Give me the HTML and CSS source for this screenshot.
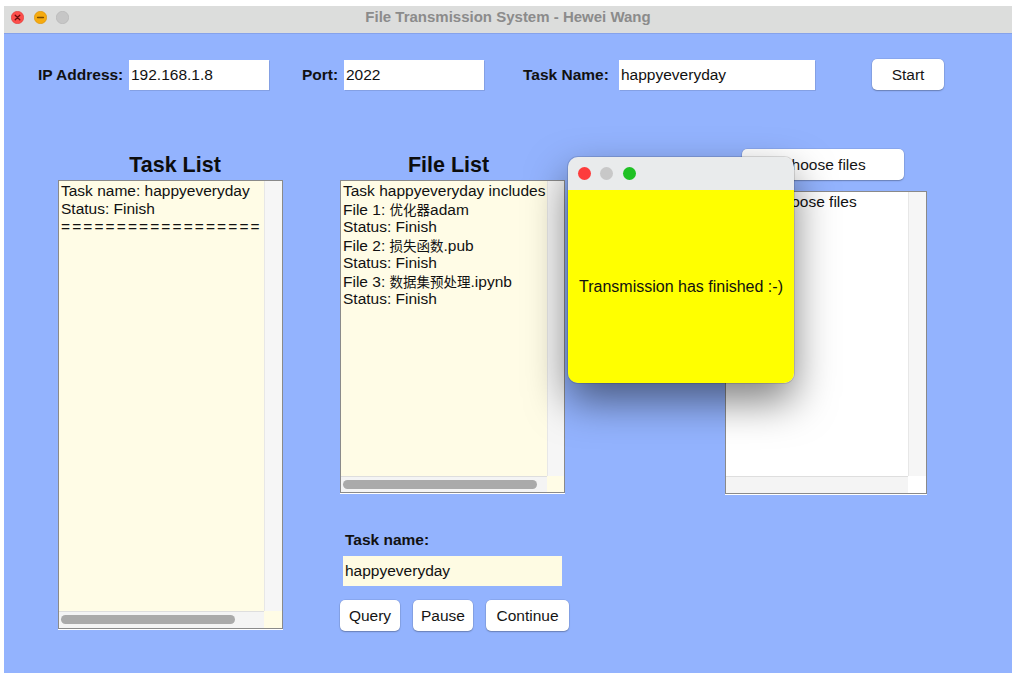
FILE: index.html
```html
<!DOCTYPE html>
<html lang="en">
<head>
<meta charset="utf-8">
<title>File Transmission System - Hewei Wang</title>
<link rel="stylesheet" href="styles.css">
</head>
<body>
<div class="window">
  <div class="titlebar">
    <div class="lights">
      <svg class="light" width="13" height="13" viewBox="0 0 13 13"><circle cx="6.5" cy="6.5" r="6.2" fill="#fd4d4a" stroke="#de3a37" stroke-width="0.6"/><path d="M4.2 4.2 L8.8 8.8 M8.8 4.2 L4.2 8.8" stroke="#6b0b0b" stroke-width="1.3" stroke-linecap="round"/></svg>
      <svg class="light" width="13" height="13" viewBox="0 0 13 13"><circle cx="6.5" cy="6.5" r="6.2" fill="#f6ab10" stroke="#d99208" stroke-width="0.6"/><path d="M3.6 6.5 L9.4 6.5" stroke="#7a4a00" stroke-width="1.4" stroke-linecap="round"/></svg>
      <svg class="light" width="13" height="13" viewBox="0 0 13 13"><circle cx="6.5" cy="6.5" r="6.2" fill="#c6c6c6" stroke="#b4b4b4" stroke-width="0.6"/></svg>
    </div>
    <div class="title">File Transmission System - Hewei Wang</div>
    <div></div>
  </div>
  <div class="content">
    <div class="toprow">
      <span class="lbl lbl-ip">IP Address:</span>
      <div class="field f-ip">192.168.1.8</div>
      <span class="lbl lbl-port">Port:</span>
      <div class="field f-port">2022</div>
      <span class="lbl lbl-task">Task Name:</span>
      <div class="field f-task">happyeveryday</div>
      <button class="btn btn-start">Start</button>
    </div>
    <div class="main">
      <div class="col col1">
        <h2 class="heading h-task">Task List</h2>
        <div class="listbox cream box-task">
          <div class="view">
            <div class="line">Task name: happyeveryday</div>
            <div class="line">Status: Finish</div>
            <div class="line eq">==================</div>
          </div>
          <div class="vtrack"></div>
          <div class="htrack"><div class="thumb thumb-task"></div></div>
          <div class="corner"></div>
        </div>
      </div>
      <div class="col col2">
        <h2 class="heading h-file">File List</h2>
        <div class="listbox cream box-file">
          <div class="view">
            <div class="line">Task happyeveryday includes</div>
            <div class="line">File 1: <span class="cjk">优化器</span>adam</div>
            <div class="line">Status: Finish</div>
            <div class="line">File 2: <span class="cjk">损失函数</span>.pub</div>
            <div class="line">Status: Finish</div>
            <div class="line">File 3: <span class="cjk">数据集预处理</span>.ipynb</div>
            <div class="line">Status: Finish</div>
          </div>
          <div class="vtrack"></div>
          <div class="htrack"><div class="thumb thumb-file"></div></div>
          <div class="corner"></div>
        </div>
        <div class="query-label">Task name:</div>
        <div class="field cream-field f-query">happyeveryday</div>
        <div class="btnrow">
          <button class="btn btn-query">Query</button>
          <button class="btn btn-pause">Pause</button>
          <button class="btn btn-continue">Continue</button>
        </div>
      </div>
      <div class="col col3">
        <button class="btn btn-choose">Choose files</button>
        <div class="listbox white box-choose">
          <div class="view view-center">
            <div class="line">Choose files</div>
          </div>
          <div class="vtrack"></div>
          <div class="htrack"></div>
          <div class="corner"></div>
        </div>
      </div>
    </div>
    <div class="popup">
      <div class="popup-bar">
        <span class="dot dot-red"></span>
        <span class="dot dot-gray"></span>
        <span class="dot dot-green"></span>
      </div>
      <div class="popup-body">Transmission has finished :-)</div>
    </div>
  </div>
</div>
</body>
</html>
```
FILE: styles.css
```css
html, body {
  margin: 0;
  padding: 0;
  background: #ffffff;
}

body {
  font-family: "Liberation Sans", "Noto Sans CJK SC", sans-serif;
  font-size: 15.5px;
  color: #111111;
}

.window {
  margin: 6px 0 0 4px;
  width: 1008px;
  height: 667px;
  overflow: hidden;
}

.titlebar {
  height: 28px;
  box-sizing: border-box;
  background: #dcdddc;
  border-bottom: 1px solid #86a2ea;
  display: grid;
  grid-template-columns: 1fr auto 1fr;
}

.lights {
  display: flex;
  gap: 9.7px;
  padding: 5px 0 0 7px;
}

.light {
  display: block;
}

.title {
  font-weight: bold;
  font-size: 15px;
  line-height: 21px;
  color: #8b8b8b;
  white-space: nowrap;
}

.content {
  position: relative;
  height: 639px;
  box-sizing: border-box;
  padding-top: 25px;
  background: #93b3fe;
}

.toprow {
  display: flex;
  align-items: flex-end;
  height: 31px;
  padding-left: 34px;
}

.lbl {
  display: block;
  flex: none;
  height: 30px;
  line-height: 30px;
  font-weight: bold;
  white-space: nowrap;
}

.lbl-ip { width: 91px; }
.lbl-port { width: 42px; margin-left: 33px; }
.lbl-task { width: 96px; margin-left: 39px; }

.field {
  flex: none;
  height: 30px;
  line-height: 30px;
  box-sizing: border-box;
  padding-left: 2px;
  background: #ffffff;
  box-shadow: 1px 1px 0 rgba(0, 0, 0, 0.1);
  white-space: nowrap;
}

.f-ip { width: 140px; }
.f-port { width: 140px; }
.f-task { width: 196px; }

.btn {
  display: block;
  flex: none;
  height: 31px;
  padding: 0;
  border: none;
  border-radius: 5px;
  background: #ffffff;
  box-shadow: 0 0 0 0.5px rgba(0, 0, 0, 0.12), 0 1px 1.5px rgba(0, 0, 0, 0.25);
  font-family: "Liberation Sans", sans-serif;
  font-size: 15.5px;
  color: #151515;
  text-align: center;
}

.btn-start { width: 72px; margin-left: 57px; }

.main {
  display: flex;
  align-items: flex-start;
  margin-top: 59px;
}

.col { flex: none; }
.col1 { margin-left: 54px; width: 225px; }
.col2 { margin-left: 57px; width: 225px; }
.col3 { margin-left: 160px; width: 202px; }

.heading {
  margin: 0;
  height: 31px;
  box-sizing: border-box;
  padding-top: 4px;
  font-size: 21.5px;
  line-height: 25px;
  font-weight: bold;
  text-align: center;
  color: #0d0d0d;
}

.h-task { padding-left: 9px; }
.h-file { padding-right: 8px; }

.listbox {
  display: grid;
  box-sizing: border-box;
  border: 1px solid #8a8a8a;
  box-shadow: 0 1px 0 #ffffff;
}

.cream { background: #fffce6; }
.white { background: #ffffff; }

.box-task {
  width: 225px;
  height: 449px;
  grid-template-columns: 1fr 18px;
  grid-template-rows: 1fr 17px;
}

.box-file {
  width: 225px;
  height: 313px;
  grid-template-columns: 1fr 17px;
  grid-template-rows: 1fr 16px;
}

.box-choose {
  width: 202px;
  height: 303px;
  margin-top: 11px;
  grid-template-columns: 1fr 18px;
  grid-template-rows: 1fr 17px;
}

.view {
  overflow: hidden;
  padding: 1px 0 0 2px;
  min-width: 0;
}

.view-center {
  text-align: center;
  padding: 1px 6px 0 0;
}

.line {
  white-space: nowrap;
  line-height: 18px;
  height: 18px;
}

.eq {
  letter-spacing: 2.1px;
}

.cjk {
  font-family: "Noto Sans CJK SC", sans-serif;
  font-size: 13.5px;
}

.vtrack {
  background: #f6f6f6;
  border-left: 1px solid #e7e7e7;
}

.htrack {
  background: #f4f4f4;
  border-top: 1px solid #dedede;
  overflow: hidden;
}

.thumb {
  height: 9px;
  margin: 3px 0 0 2px;
  border-radius: 5px;
  background: #aaaaaa;
}

.thumb-task { width: 174px; }
.thumb-file { width: 194px; }

.corner { background: transparent; }

.query-label {
  margin-top: 38px;
  padding-left: 5px;
  height: 18px;
  line-height: 18px;
  font-weight: bold;
}

.cream-field {
  background: #fefbe3;
  box-shadow: none;
}

.f-query {
  width: 219px;
  margin: 7px 0 0 3px;
}

.btnrow {
  display: flex;
  gap: 13px;
  margin-top: 14px;
}

.btn-query { width: 60px; }
.btn-pause { width: 60px; }
.btn-continue { width: 83px; }

.btn-choose {
  width: 162px;
  margin-left: 17px;
}

.popup {
  position: absolute;
  left: 564px;
  top: 123px;
  width: 226px;
  height: 226px;
  border-radius: 10px;
  overflow: hidden;
  display: flex;
  flex-direction: column;
  box-shadow: 0 18px 40px rgba(0, 0, 0, 0.5), 0 0 0 1px rgba(0, 0, 0, 0.12);
}

.popup-bar {
  height: 33px;
  flex: none;
  background: #e9ebec;
  display: flex;
  align-items: flex-start;
  gap: 9.5px;
  padding: 10px 0 0 9.5px;
  box-sizing: border-box;
}

.dot {
  width: 13px;
  height: 13px;
  border-radius: 50%;
}

.dot-red { background: #fd3c3c; }
.dot-gray { background: #c8c8c8; }
.dot-green { background: #1fc124; }

.popup-body {
  flex: 1;
  background: #ffff00;
  display: flex;
  align-items: center;
  justify-content: center;
  font-size: 16px;
  white-space: nowrap;
  color: #111111;
}
```
